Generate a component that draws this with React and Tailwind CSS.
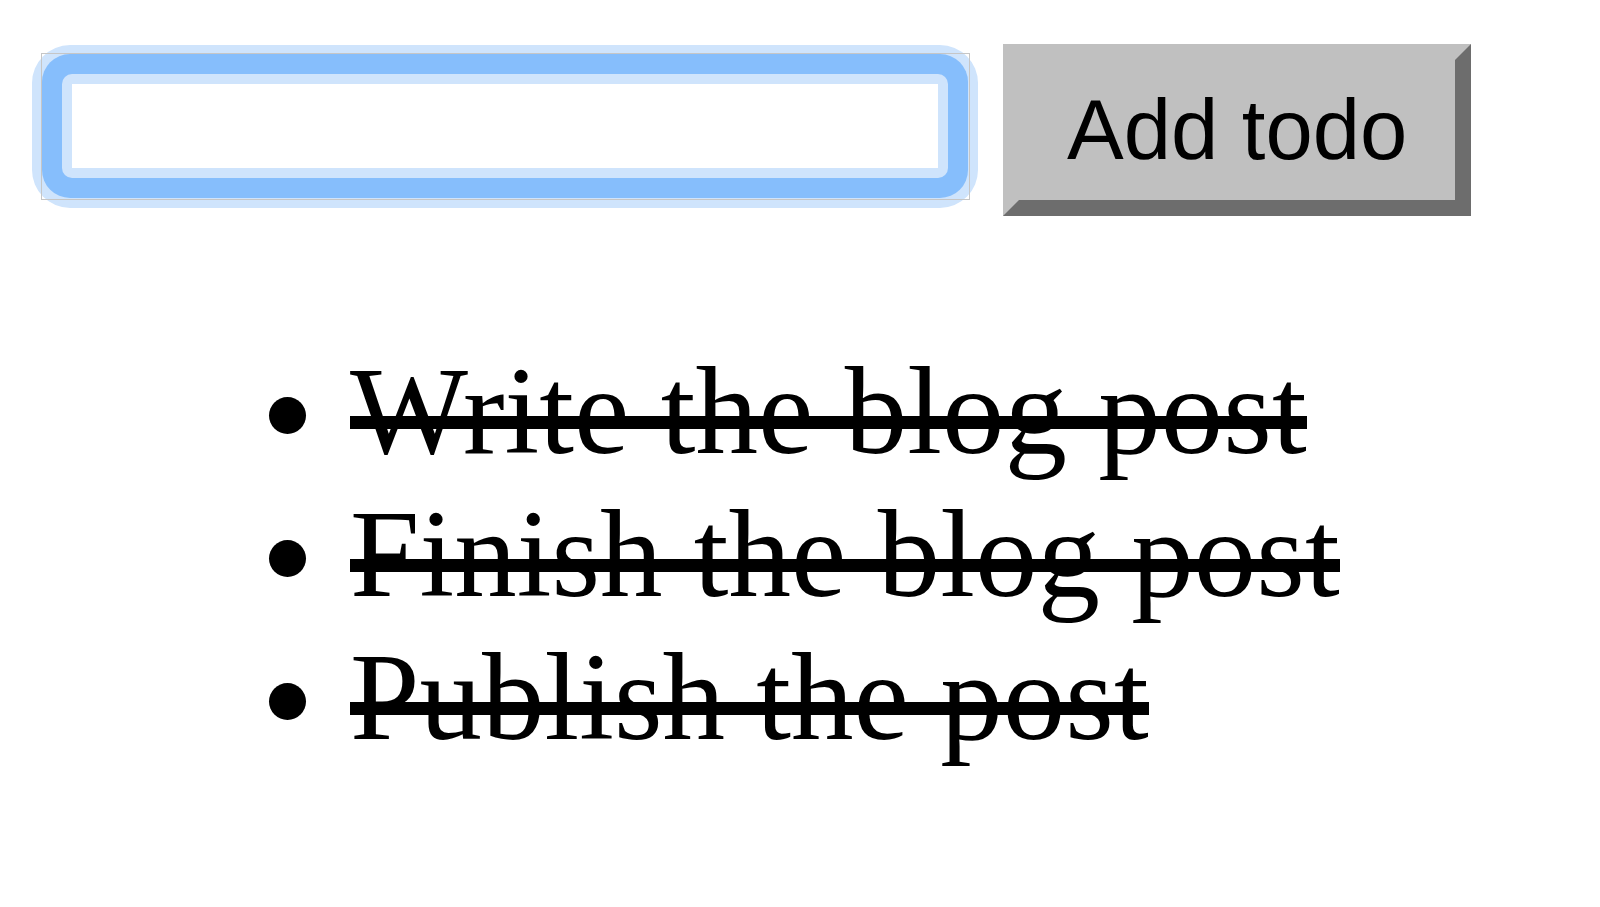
import React, { useState } from 'react';

function App() {
  const [text, setText] = useState('');
  const [todos, setTodos] = useState([
    { id: 1, title: 'Write the blog post', done: true },
    { id: 2, title: 'Finish the blog post', done: true },
    { id: 3, title: 'Publish the post', done: true },
  ]);

  const addTodo = () => {
    if (!text.trim()) return;
    setTodos([...todos, { id: Date.now(), title: text, done: false }]);
    setText('');
  };

  const toggle = (id) =>
    setTodos(todos.map((t) => (t.id === id ? { ...t, done: !t.done } : t)));

  return (
    <div className="min-h-screen bg-white text-black">
      {/* input + button row */}
      <div className="flex items-start gap-[25px] pl-[32px] pt-[44px]">
        <div className="relative mt-[1px] rounded-[38px] bg-[#cfe4fc] pt-[9px] px-[10px] pb-[10px]">
          <div className="rounded-[28px] bg-[#86befc] p-[20px]">
            <div className="rounded-[10px] bg-[#cfe4fc] p-[10px]">
              <input
                value={text}
                onChange={(e) => setText(e.target.value)}
                className="block h-[84px] w-[866px] bg-white px-2 text-[60px] outline-none font-['Liberation_Sans',Arial,sans-serif]"
              />
            </div>
          </div>
          <div className="pointer-events-none absolute left-[9px] top-[8px] right-[8px] bottom-[8px] border border-[#c6c6c6]" />
        </div>

        <button
          onClick={addTodo}
          className="border-[16px] border-t-[#c0c0c0] border-l-[#c0c0c0] border-r-[#6d6d6d] border-b-[#6d6d6d] bg-[#c0c0c0] px-[48px] py-[21px] text-[85px] leading-[normal] text-black font-['Liberation_Sans',Arial,sans-serif]"
        >
          Add todo
        </button>
      </div>

      {/* todo list */}
      <ul className="mt-[124px] list-disc pl-[350px] text-[125px] leading-[normal] font-['Liberation_Serif','Times_New_Roman',serif]">
        {todos.map((t) => (
          <li key={t.id} onClick={() => toggle(t.id)}>
            <span className="relative inline-block">
              {t.title}
              {t.done && (
                <span className="pointer-events-none absolute left-0 right-0 top-[76px] h-[13px] bg-black" />
              )}
            </span>
          </li>
        ))}
      </ul>
    </div>
  );
}

export default App;
